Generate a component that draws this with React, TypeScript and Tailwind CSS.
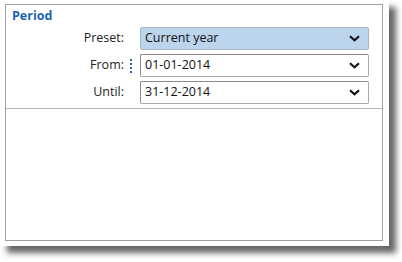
import { ReactNode } from "react"

function Chevron() {
  return (
    <svg width="11" height="7" viewBox="0 0 11 7" className="shrink-0">
      <path d="M1 1.3 L5.5 5.3 L10 1.3" fill="none" stroke="#111" strokeWidth="2.2" />
    </svg>
  )
}

function Select({ value, active }: { value: string; active?: boolean }) {
  return (
    <div
      className={
        "flex items-center justify-between h-[23px] w-[229px] pl-[4px] pr-[8px] rounded-[2px] border " +
        (active ? "bg-[#bcd4ec] border-[#a7b6c6]" : "bg-white border-[#a9a9a9] border-t-[#8a8a8a] border-l-[#8a8a8a]")
      }
    >
      <span className="text-[12.5px] text-[#111]">{value}</span>
      <Chevron />
    </div>
  )
}

function Row({ label, extra, children }: { label: string; extra?: ReactNode; children: ReactNode }) {
  return (
    <div className="flex items-center">
      <div className="w-[118px] text-right text-[12.5px] text-[#222]">{label}</div>
      <div className="w-[16px] flex justify-center">{extra}</div>
      {children}
    </div>
  )
}

function Dots() {
  return (
    <div className="flex flex-col gap-[2px] mr-[2px]">
      {[0, 1, 2, 3].map((i) => (
        <span key={i} className="block w-[2px] h-[2px] bg-[#1e64b4]" />
      ))}
    </div>
  )
}

export default function App() {
  return (
    <div className="w-[402px] h-[262px] bg-white" style={{ fontFamily: '"Open Sans", "Noto Sans", sans-serif' }}>
      <div className="w-[389px] h-[246px] bg-white pt-[4px] pl-[5px] shadow-[7px_7px_6px_rgba(0,0,0,0.6)]">
        <div className="w-[378px] h-[237px] border border-[#a0a0a0] flex flex-col">
          <div className="h-[22px] pl-[6px] pt-[1px] flex items-center text-[12.5px] font-bold text-[#2062b0]">Period</div>
          <div className="flex flex-col gap-[4px]">
            <Row label="Preset:">
              <Select value="Current year" active />
            </Row>
            <Row label="From:" extra={<Dots />}>
              <Select value="01-01-2014" />
            </Row>
            <Row label="Until:">
              <Select value="31-12-2014" />
            </Row>
          </div>
          <div className="mt-[4px] h-px bg-[#b4b4b4]" />
        </div>
      </div>
    </div>
  )
}
